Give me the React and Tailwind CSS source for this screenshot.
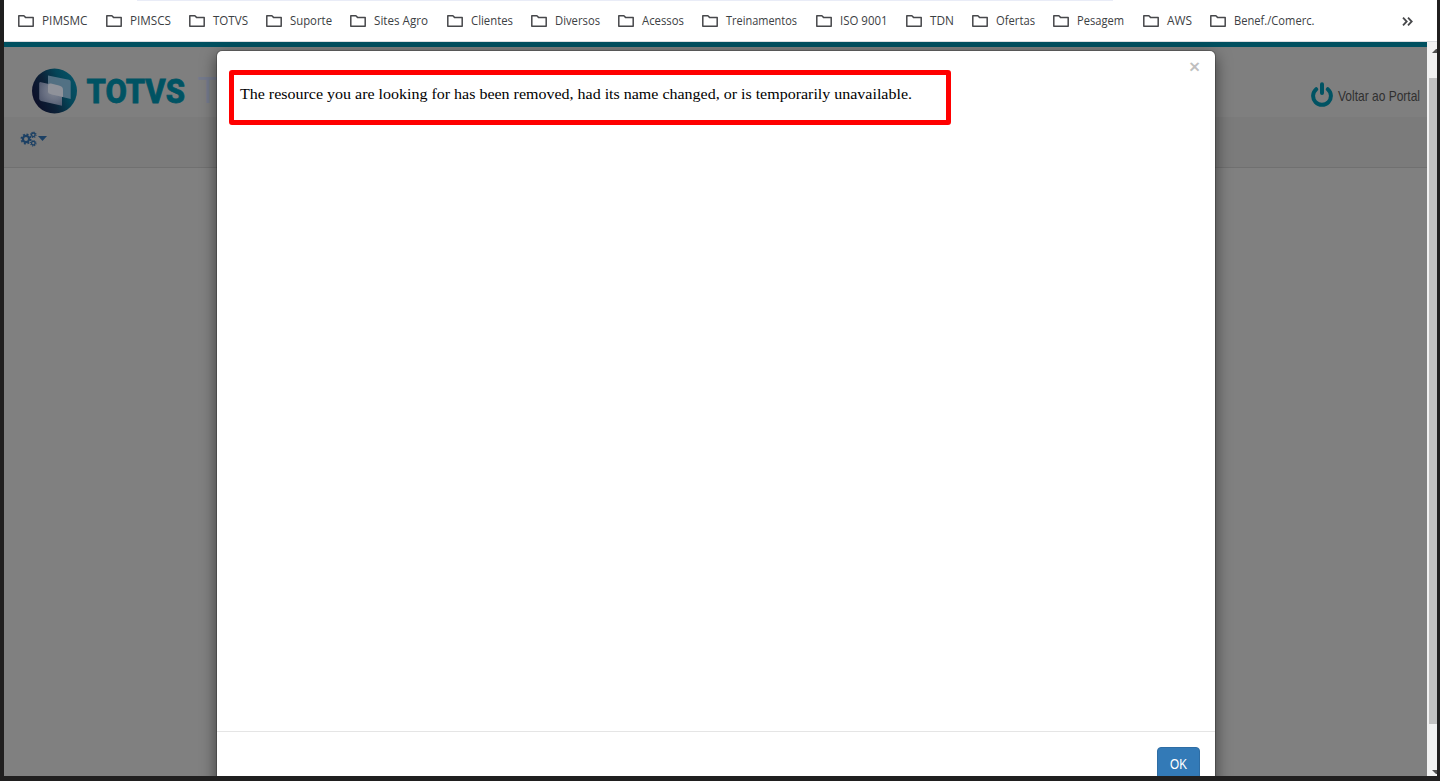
import React from "react";

const bookmarks = [
  { label: "PIMSMC", cell: "w-[88px]", width: 45.5 },
  { label: "PIMSCS", cell: "w-[83px]", width: 41 },
  { label: "TOTVS", cell: "w-[77px]", width: 35 },
  { label: "Suporte", cell: "w-[84px]", width: 42 },
  { label: "Sites Agro", cell: "w-[97px]", width: 54 },
  { label: "Clientes", cell: "w-[84px]", width: 42 },
  { label: "Diversos", cell: "w-[87px]", width: 45 },
  { label: "Acessos", cell: "w-[84px]", width: 42 },
  { label: "Treinamentos", cell: "w-[114px]", width: 71 },
  { label: "ISO 9001", cell: "w-[90px]", width: 47.5 },
  { label: "TDN", cell: "w-[66px]", width: 24 },
  { label: "Ofertas", cell: "w-[81px]", width: 39 },
  { label: "Pesagem", cell: "w-[90px]", width: 47 },
  { label: "AWS", cell: "w-[67px]", width: 25 },
  { label: "Benef./Comerc.", cell: "w-[110px]", width: 80.5 },
];

function FolderIcon() {
  return (
    <svg width="16" height="12" viewBox="0 0 16 12" className="shrink-0">
      <path
        d="M.8 .8H5.9L7.5 2.4H15.2V11.2H.8Z"
        fill="none"
        stroke="#47484b"
        strokeWidth="1.5"
        strokeLinejoin="round"
      />
    </svg>
  );
}

function FitText({ children, width, size, weight = 400 }) {
  return (
    <svg width={width + 2} height="18" className="shrink-0 overflow-visible">
      <text
        x="0"
        y="13"
        fontSize={size}
        fontWeight={weight}
        fill="currentColor"
        textLength={width}
        lengthAdjust="spacingAndGlyphs"
      >
        {children}
      </text>
    </svg>
  );
}

function BookmarkBar() {
  return (
    <div className="h-[42px] shrink-0 border-b border-[#dadce0] bg-white font-['Open_Sans',sans-serif] text-[#3c4043]">
      <div className="ml-[133px] h-px w-[976px] bg-[#e9ecf7]" />
      <div className="flex h-10 items-center pl-[14px]">
        {bookmarks.map((b) => (
          <div key={b.label} className={`flex shrink-0 items-center gap-2 ${b.cell}`}>
            <FolderIcon />
            <FitText width={b.width} size={12}>{b.label}</FitText>
          </div>
        ))}
        <svg width="11" height="9" viewBox="0 0 11 9" className="ml-[82px]">
          <path d="M1 .7L4.7 4.5L1 8.3M6 .7L9.7 4.5L6 8.3" fill="none" stroke="#47484b" strokeWidth="1.8" />
        </svg>
      </div>
    </div>
  );
}

function Logo() {
  return (
    <svg width="156" height="48" viewBox="0 0 156 48" className="shrink-0 overflow-visible">
      <defs>
        <linearGradient id="ball" x1="0" y1=".75" x2="1" y2=".3">
          <stop offset="0" stopColor="#0c0c26" />
          <stop offset=".4" stopColor="#0c2238" />
          <stop offset=".7" stopColor="#044558" />
          <stop offset="1" stopColor="#065367" />
        </linearGradient>
        <radialGradient id="glow" gradientUnits="userSpaceOnUse" cx="22" cy="23" r="19">
          <stop offset="0" stopColor="#8c909a" />
          <stop offset=".5" stopColor="#717789" />
          <stop offset="1" stopColor="#4f576d" />
        </radialGradient>
      </defs>
      <circle cx="22.5" cy="23" r="22.5" fill="url(#ball)" />
      <path d="M16 7.5L37 11.8Q38.7 12.2 38.7 14V31L16 25.5Z" fill="#5b7688" fillOpacity=".9" />
      <path d="M8 14L30 19V37.8L9 33Q7.2 32.4 7.2 30.5V15Z" fill="url(#glow)" fillOpacity=".92" />
      <path d="M19 15.5L27 17.5Q31 18.6 31 21.5V29L20 26.5Q16 25.4 16 23.5V17.5Q16 15 19 15.5Z" fill="#8f929a" />
      <text
        x="54.5"
        y="35"
        className="font-[Roboto,sans-serif]"
        fontSize="34"
        fontWeight="800"
        fill="#005363"
        stroke="#005363"
        strokeWidth=".8"
        textLength="98.5"
        lengthAdjust="spacingAndGlyphs"
      >
        TOTVS
      </text>
    </svg>
  );
}

function PowerIcon() {
  return (
    <svg width="22" height="25" viewBox="0 0 22 25" fill="none" stroke="#005363" strokeWidth="4" strokeLinecap="round">
      <path d="M5.2 7.2A8.9 8.9 0 1 0 16.8 7.2" />
      <path d="M11 2.2V11" />
    </svg>
  );
}

function CogsIcon() {
  return (
    <svg width="17" height="16" viewBox="0 0 17 16" fill="none" stroke="currentColor">
      <circle cx="6" cy="8" r="3.1" strokeWidth="2.2" />
      <circle cx="6" cy="8" r="4.7" strokeWidth="1.6" strokeDasharray="1.95 1.74" />
      <circle cx="13.3" cy="3.8" r="1.8" strokeWidth="1.3" />
      <circle cx="13.3" cy="3.8" r="2.7" strokeWidth="1.1" strokeDasharray="1.06 1.06" />
      <circle cx="13.3" cy="12.2" r="1.8" strokeWidth="1.3" />
      <circle cx="13.3" cy="12.2" r="2.7" strokeWidth="1.1" strokeDasharray="1.06 1.06" />
    </svg>
  );
}

function Header() {
  return (
    <div className="flex h-[70px] items-start justify-between bg-[#7f7f7f] pl-7 pr-[5px]">
      <div className="flex items-start pt-[21px]">
        <Logo />
        <span className="ml-[10px] font-['Open_Sans',sans-serif] text-[36px] leading-[44px] tracking-[-2px] text-[#747a8c]">Te</span>
      </div>
      <div className="flex items-start gap-[5px] pt-[35px] text-[#303030]">
        <PowerIcon />
        <div className="mt-[6px] w-[84px] font-['Liberation_Sans',sans-serif]">
          <FitText width={82} size={15}>Voltar ao Portal</FitText>
        </div>
      </div>
    </div>
  );
}

function Toolbar() {
  return (
    <div className="flex h-[51px] items-start border-b border-[#707070] bg-[#7b7b7b] pl-4 pt-[14px] text-[#1c4064]">
      <CogsIcon />
      <svg width="9" height="5" viewBox="0 0 9 5" className="ml-px mt-[5px]">
        <path d="M0 0H9L4.5 5Z" fill="currentColor" />
      </svg>
    </div>
  );
}

function Scrollbar() {
  return (
    <div className="flex w-[10px] shrink-0 flex-col bg-[#f1f1f1] pl-[2px]">
      <svg width="8" height="36" viewBox="0 0 8 36" className="shrink-0">
        <path d="M3 11L7 7L8 7V11Z" fill="#505050" />
      </svg>
      <div className="h-[646px] bg-[#c1c1c1]" />
      <svg width="8" height="52" viewBox="0 0 8 52" className="shrink-0">
        <path d="M3 46H8V50H7Z" fill="#505050" />
      </svg>
    </div>
  );
}

function ErrorModal() {
  return (
    <div className="absolute left-[212px] top-[8px] flex h-[760px] w-[1000px] flex-col rounded-[6px] border border-black/20 bg-white bg-clip-padding shadow-[0_5px_15px_rgba(0,0,0,0.5)]">
      <div className="relative h-[680px] shrink-0 px-3 pt-[19px]">
        <button className="absolute right-[15px] top-[5px] font-['Liberation_Sans',sans-serif] text-[19px] font-bold leading-[21px] text-black/25">
          ×
        </button>
        <div className="h-[55px] w-[722px] rounded-[3px] border-[5px] border-[#ff0000] pl-[6px] pt-[10px] font-['Liberation_Serif',serif] leading-[18px] text-black">
          <svg width="674" height="18" className="block overflow-visible">
            <text x="0" y="14" fontSize="15.5" textLength="672" lengthAdjust="spacingAndGlyphs">
              The resource you are looking for has been removed, had its name changed, or is temporarily unavailable.
            </text>
          </svg>
        </div>
      </div>
      <div className="flex justify-end border-t border-[#e5e5e5] p-[15px]">
        <button className="flex h-[34px] w-[43px] rounded-[4px] border border-[#2e6da4] bg-[#337ab7] pl-3 pt-2 font-['Liberation_Sans',sans-serif] text-white">
          <FitText width={17} size={14}>OK</FitText>
        </button>
      </div>
    </div>
  );
}

export default function App() {
  return (
    <div className="flex h-[781px] w-[1440px] flex-col overflow-hidden bg-[#201f1f] pb-[5px] pl-1 pr-[3px]">
      <BookmarkBar />
      <div className="flex min-h-0 flex-1">
        <div className="relative flex-1 overflow-hidden bg-[#808080]">
          <div className="h-[5px] bg-[#005060]" />
          <Header />
          <Toolbar />
          <ErrorModal />
        </div>
        <Scrollbar />
      </div>
    </div>
  );
}
